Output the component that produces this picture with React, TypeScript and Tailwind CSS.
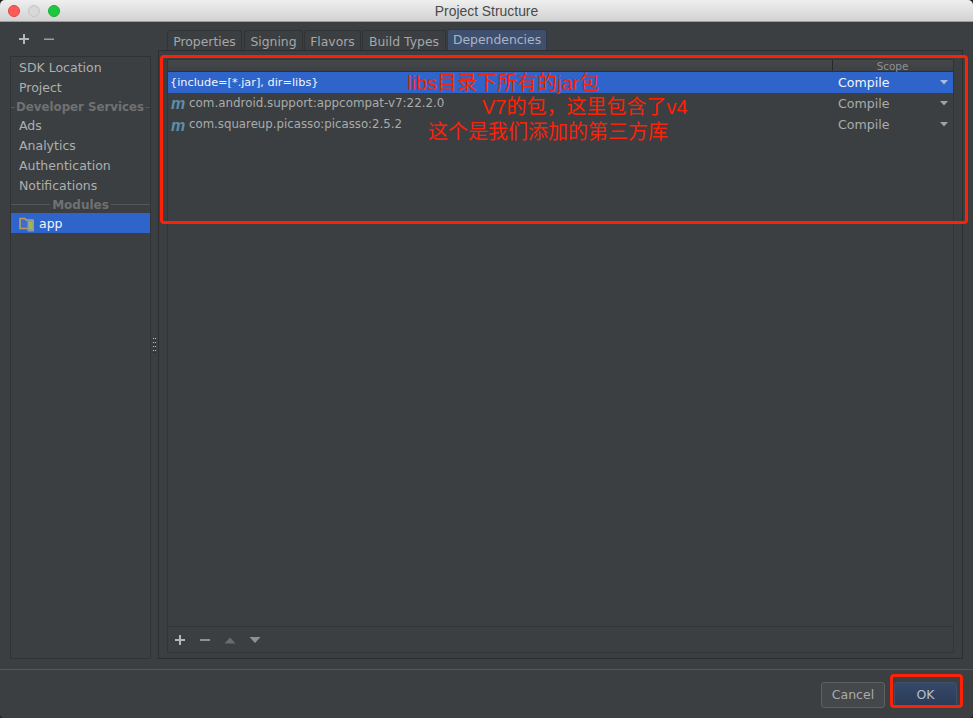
import React from "react";

const font = { fontFamily: '"DejaVu Sans", sans-serif' };

function Tab({ label, active, className }: { label: string; active?: boolean; className: string }) {
  return (
    <div
      className={`flex justify-center border border-b-0 rounded-t-[3px] ${className} ${
        active
          ? "h-[21px] pt-[2px] bg-[#3f506e] border-[#2f3a4c] text-[#a9b5c6]"
          : "h-[20px] mt-[1px] pt-[3px] bg-[#3c3f41] border-[#313335] text-[#a5a7a8]"
      } text-[12.4px] leading-[15px]`}
    >
      {label}
    </div>
  );
}

function Side({ label }: { label: string }) {
  return <div className="h-[20px] pl-[8px] text-[12.5px] leading-[20px] text-[#adafb0]">{label}</div>;
}

function Row({
  label,
  selected,
  module,
  labelClass,
}: {
  label: string;
  selected?: boolean;
  module?: boolean;
  labelClass: string;
}) {
  return (
    <div
      className={`h-[21px] flex items-center pt-[1px] ${
        selected ? "bg-[#2f65ca] text-[#f2f5fb]" : "text-[#a9abac]"
      }`}
    >
      <div className="flex-1 flex items-center pl-[2px]">
        {module && (
          <span
            className="w-[16px] mr-[3px] text-center text-[#5a8fb0] font-bold italic text-[16px] leading-[15px]"
            style={{ fontFamily: '"Liberation Sans", sans-serif' }}
          >
            m
          </span>
        )}
        <span className={labelClass}>{label}</span>
      </div>
      <div className="w-[120px] flex items-center pl-[5px] pr-[5px] justify-between text-[12.6px]">
        <span>Compile</span>
        <svg width="8" height="5" viewBox="0 0 8 5">
          <path d="M0 0H8L4 4.5Z" fill={selected ? "#a9bbdc" : "#a0a2a3"} />
        </svg>
      </div>
    </div>
  );
}

function Grip() {
  return (
    <div className="w-[7px] flex items-center justify-center">
      <div className="grid grid-cols-2 gap-x-[1px] gap-y-[1px]">
        {Array.from({ length: 16 }).map((_, i) => (
          <div key={i} className={`w-[1px] h-[1px] ${i % 4 < 2 ? "bg-[#b9bbbc]" : "bg-[#232425]"}`} />
        ))}
      </div>
    </div>
  );
}

export default function App() {
  return (
    <div className="relative w-[973px] h-[718px] overflow-hidden bg-[#1e1f20]" style={font}>
      <div className="w-full h-full flex flex-col rounded-t-[5px] rounded-b-[4px] overflow-hidden bg-[#3c3f41]">
        {/* Title bar */}
        <div className="relative h-[22px] shrink-0 flex items-center justify-center pt-[2px] bg-gradient-to-b from-[#efefef] to-[#d2d2d2] border-b border-[#9c9c9c]">
          <div className="absolute left-[8px] top-[5px] flex gap-[8px]">
            <div className="w-[12px] h-[12px] rounded-full bg-[#fc5b57] border border-[#e2443f]" />
            <div className="w-[12px] h-[12px] rounded-full bg-[#d8d8d8] border border-[#c4c4c4]" />
            <div className="w-[12px] h-[12px] rounded-full bg-[#1fc73f] border border-[#17ae33]" />
          </div>
          <span className="text-[13.9px] text-[#4a4a4a]" style={{ fontFamily: '"Liberation Sans", sans-serif' }}>
            Project Structure
          </span>
        </div>

        {/* Body */}
        <div className="h-[647px] shrink-0 flex pl-[10px] pr-[10px]">
          <div className="w-[141px] flex flex-col">
            <div className="h-[34px] shrink-0 flex items-center pl-[8px] gap-[13px]">
              <svg width="12" height="12" viewBox="0 0 12 12">
                <path d="M5 1h2v4h4v2H7v4H5V7H1V5h4z" fill="#b4b6b7" />
              </svg>
              <svg width="12" height="12" viewBox="0 0 12 12">
                <path d="M1 5.5h10v1.5H1z" fill="#9a9c9d" />
              </svg>
            </div>
            <div className="h-[603px] border border-[#303234] flex flex-col pt-[1px]">
              <Side label="SDK Location" />
              <Side label="Project" />
              <div className="h-[18px] pt-[1px] flex items-center text-[11.8px] font-bold text-[#6f7173]">
                <div className="w-[4px] h-px bg-[#55585a]" />
                <span className="px-[1px] whitespace-nowrap">Developer Services</span>
                <div className="flex-1 h-px bg-[#55585a]" />
              </div>
              <Side label="Ads" />
              <Side label="Analytics" />
              <Side label="Authentication" />
              <Side label="Notifications" />
              <div className="h-[17px] flex items-center text-[12px] font-bold text-[#6f7173]">
                <div className="flex-1 h-px bg-[#55585a]" />
                <span className="px-[2px]">Modules</span>
                <div className="flex-1 h-px bg-[#55585a]" />
              </div>
              <div className="h-[20px] pt-[2px] bg-[#2f65ca] flex items-center pl-[8px] text-[12.5px] text-[#f2f5fb]">
                <svg width="16" height="16" viewBox="0 0 16 16" className="mr-[4px]">
                  <path d="M1 2.5h5l1 1.5h7v8.5H1z" fill="#3f6fc4" stroke="#b99a63" strokeWidth="1.6" />
                  <rect x="8.5" y="4.5" width="6.5" height="11" rx="0.8" fill="#8f9aa8" />
                  <rect x="10" y="6" width="3.5" height="7" fill="#9dba45" />
                </svg>
                app
              </div>
            </div>
          </div>

          <Grip />

          <div className="flex-1 flex flex-col pt-[7px]">
            <div className="h-[21px] shrink-0 flex pl-[9px]">
              <Tab label="Properties" className="w-[75px] mr-[2px]" />
              <Tab label="Signing" className="w-[59px] mr-[1px]" />
              <Tab label="Flavors" className="w-[57px] mr-[1px]" />
              <Tab label="Build Types" className="w-[84px] mr-[1px]" />
              <Tab label="Dependencies" active className="w-[100px]" />
            </div>
            <div className="h-[609px] border border-[#2c2e30] p-[8px] pb-[5px]">
              <div className="h-full border border-[#323436] flex flex-col">
                <div className="h-[12px] shrink-0 flex bg-gradient-to-b from-[#45484a] to-[#3e4143] border-b border-[#2e3032] pr-[1px]">
                  <div className="flex-1" />
                  <div className="w-[120px] border-l border-[#262829] text-center text-[10.4px] leading-[12px] text-[#8f9192]">
                    Scope
                  </div>
                </div>
                <Row label="{include=[*.jar], dir=libs}" selected labelClass="text-[11.3px] pt-[1px]" />
                <Row label="com.android.support:appcompat-v7:22.2.0" module labelClass="text-[11.9px]" />
                <Row label="com.squareup.picasso:picasso:2.5.2" module labelClass="text-[11.75px]" />
                <div className="flex-1" />
                <div className="h-[26px] shrink-0 border-t border-[#323436] flex items-center pl-[6px] gap-[13px]">
                  <svg width="12" height="12" viewBox="0 0 12 12">
                    <path d="M5 1h2v4h4v2H7v4H5V7H1V5h4z" fill="#b4b6b7" />
                  </svg>
                  <svg width="12" height="12" viewBox="0 0 12 12">
                    <path d="M1 5h10v2H1z" fill="#8f9192" />
                  </svg>
                  <svg width="12" height="12" viewBox="0 0 12 12">
                    <path d="M0.5 9.5L6 3.5L11.5 9.5Z" fill="#6a6c6e" />
                  </svg>
                  <svg width="12" height="12" viewBox="0 0 12 12">
                    <path d="M0.5 3H11.5L6 9Z" fill="#8f9192" />
                  </svg>
                </div>
              </div>
            </div>
          </div>
        </div>

        {/* Footer */}
        <div className="flex-1 border-t border-[#53565a] flex justify-end items-start pt-[12px] pr-[16px] gap-[9px]">
          <div className="w-[64px] h-[26px] rounded-[3px] border border-[#5e6163] bg-[#45484a] flex items-center justify-center text-[12.5px] text-[#a9abac]">
            Cancel
          </div>
          <div className="w-[63px] h-[26px] rounded-[3px] border border-[#3e5068] bg-gradient-to-b from-[#36496a] to-[#2a3a55] flex items-center justify-center text-[12.5px] text-[#b9bec6]">
            OK
          </div>
        </div>
      </div>

      {/* Red annotations */}
      <div className="absolute left-[160px] top-[55px] w-[808px] h-[169px] border-[3px] border-[#fb2208] rounded-[4px]" />
      <div className="absolute left-[890px] top-[674px] w-[73px] h-[34px] border-[3px] border-[#fb2208] rounded-[4px]" />
      <div className="absolute inset-0 text-[#fb2208] text-[20px] leading-[24px] whitespace-nowrap" style={{ fontFamily: '"Liberation Sans", "Noto Sans CJK SC", sans-serif' }}>
        <span className="absolute left-[407px] top-[71px]">libs目录下所有的jar包</span>
        <span className="absolute left-[482px] top-[95px]">V7的包，这里包含了v4</span>
        <span className="absolute left-[428px] top-[120px]">这个是我们添加的第三方库</span>
      </div>
    </div>
  );
}
